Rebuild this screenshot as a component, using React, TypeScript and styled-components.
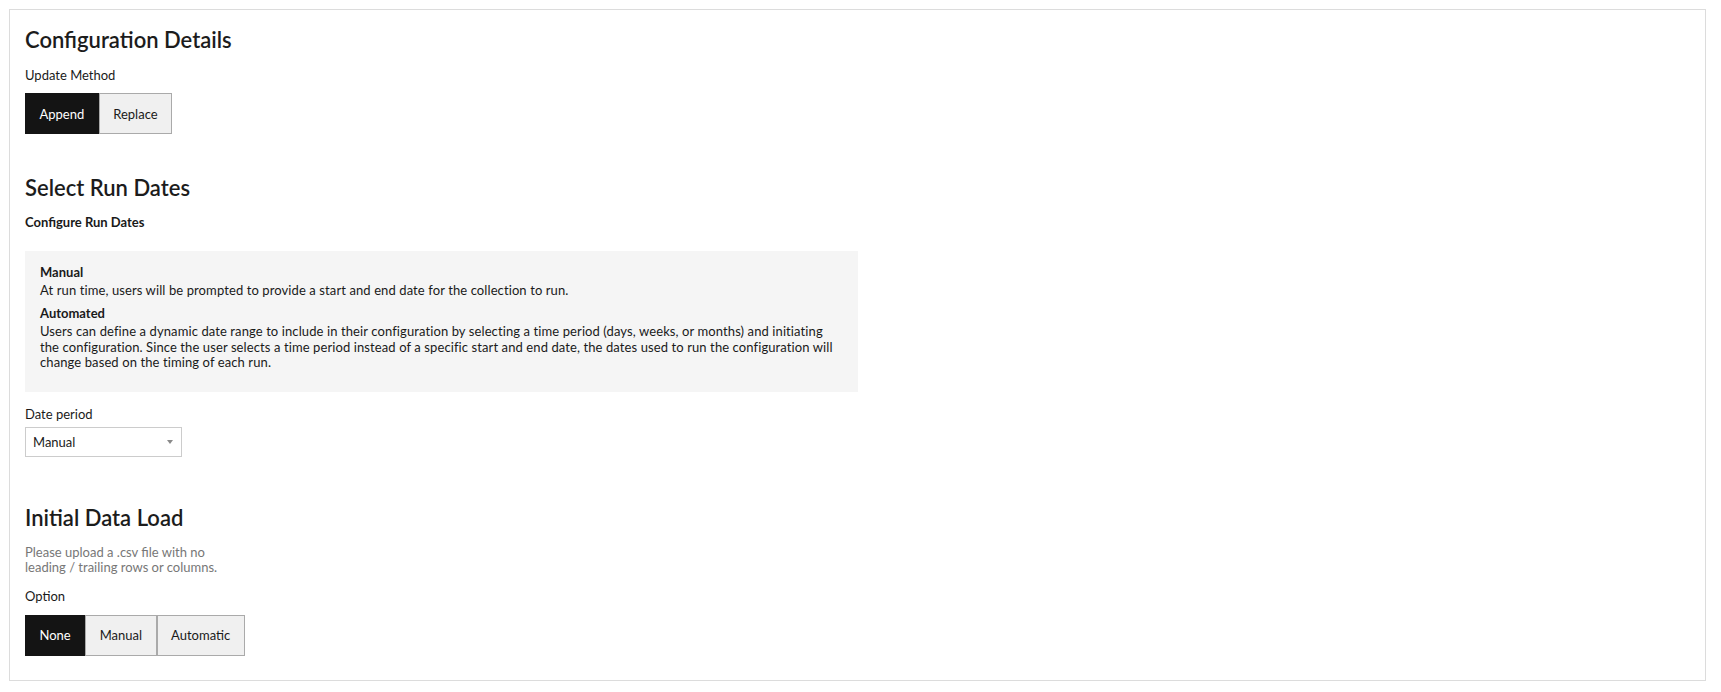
import React from "react";
import styled, { createGlobalStyle } from "styled-components";

const GlobalStyle = createGlobalStyle`
  html, body { margin: 0; padding: 0; background: #ffffff; }
  body { font-family: Lato, "Open Sans", "Liberation Sans", sans-serif; color: #1a1a1a; }
  * { box-sizing: border-box; }
`;

const Page = styled.div`
  padding: 9px 15px 12px 9px;
`;

const Panel = styled.div`
  border: 1px solid #dcdcdc;
  padding: 17px 15px 24px 15px;
  display: flex;
  flex-direction: column;
  align-items: flex-start;
`;

const Heading = styled.h2<{ $top?: number }>`
  margin: ${(p) => p.$top ?? 0}px 0 0 0;
  font-size: 22px;
  line-height: 26px;
  font-weight: 600;
  color: #1c1c1c;
`;

const Label = styled.div<{ $top: number; $bold?: boolean }>`
  margin-top: ${(p) => p.$top}px;
  font-size: 13px;
  line-height: 18px;
  font-weight: ${(p) => (p.$bold ? 700 : 400)};
  color: #1a1a1a;
`;

const Segmented = styled.div<{ $top: number }>`
  margin-top: ${(p) => p.$top}px;
  display: flex;
`;

const SegButton = styled.button<{ $active?: boolean }>`
  height: 41px;
  padding: 0 13.5px;
  border: 1px solid ${(p) => (p.$active ? "#141414" : "#aaaaaa")};
  background: ${(p) => (p.$active ? "#141414" : "#f0f0f0")};
  color: ${(p) => (p.$active ? "#ffffff" : "#1a1a1a")};
  font-family: Lato, "Open Sans", "Liberation Sans", sans-serif;
  font-size: 13px;
  display: inline-flex;
  align-items: center;
  cursor: pointer;
`;

const InfoBox = styled.div`
  margin-top: 20px;
  width: 833px;
  background: #f5f5f5;
  padding: 13px 15px 21px 15px;
`;

const InfoTitle = styled.div<{ $top?: number }>`
  margin-top: ${(p) => p.$top ?? 0}px;
  font-size: 13px;
  line-height: 16px;
  font-weight: 700;
  color: #1a1a1a;
`;

const InfoText = styled.p`
  margin: 3px 0 0 0;
  font-size: 13px;
  line-height: 15.5px;
  letter-spacing: 0.1px;
  color: #1a1a1a;
`;

const SelectBox = styled.div`
  margin-top: 4px;
  width: 157px;
  height: 30px;
  border: 1px solid #cccccc;
  background: #ffffff;
  display: flex;
  align-items: center;
  justify-content: space-between;
  padding: 0 8px 0 7px;
  font-size: 13px;
  color: #1a1a1a;
`;

const Caret = styled.span`
  width: 0;
  height: 0;
  border-left: 3px solid transparent;
  border-right: 3px solid transparent;
  border-top: 4px solid #8a8a8a;
`;

const Hint = styled.p`
  margin: 14px 0 0 0;
  max-width: 200px;
  font-size: 13px;
  line-height: 15px;
  color: #777777;
`;

export default function App() {
  return (
    <>
      <GlobalStyle />
      <Page>
        <Panel>
          <Heading>Configuration Details</Heading>
          <Label $top={13}>Update Method</Label>
          <Segmented $top={9}>
            <SegButton $active>Append</SegButton>
            <SegButton>Replace</SegButton>
          </Segmented>

          <Heading $top={41}>Select Run Dates</Heading>
          <Label $top={12} $bold>
            Configure Run Dates
          </Label>
          <InfoBox>
            <InfoTitle>Manual</InfoTitle>
            <InfoText>
              At run time, users will be prompted to provide a start and end date for the collection to run.
            </InfoText>
            <InfoTitle $top={6.5}>Automated</InfoTitle>
            <InfoText>
              Users can define a dynamic date range to include in their configuration by selecting a time period
              (days, weeks, or months) and initiating the configuration. Since the user selects a time period
              instead of a specific start and end date, the dates used to run the configuration will change based
              on the timing of each run.
            </InfoText>
          </InfoBox>
          <Label $top={13}>Date period</Label>
          <SelectBox>
            <span>Manual</span>
            <Caret />
          </SelectBox>

          <Heading $top={48}>Initial Data Load</Heading>
          <Hint>Please upload a .csv file with no leading / trailing rows or columns.</Hint>
          <Label $top={12}>Option</Label>
          <Segmented $top={10}>
            <SegButton $active>None</SegButton>
            <SegButton>Manual</SegButton>
            <SegButton>Automatic</SegButton>
          </Segmented>
        </Panel>
      </Page>
    </>
  );
}
